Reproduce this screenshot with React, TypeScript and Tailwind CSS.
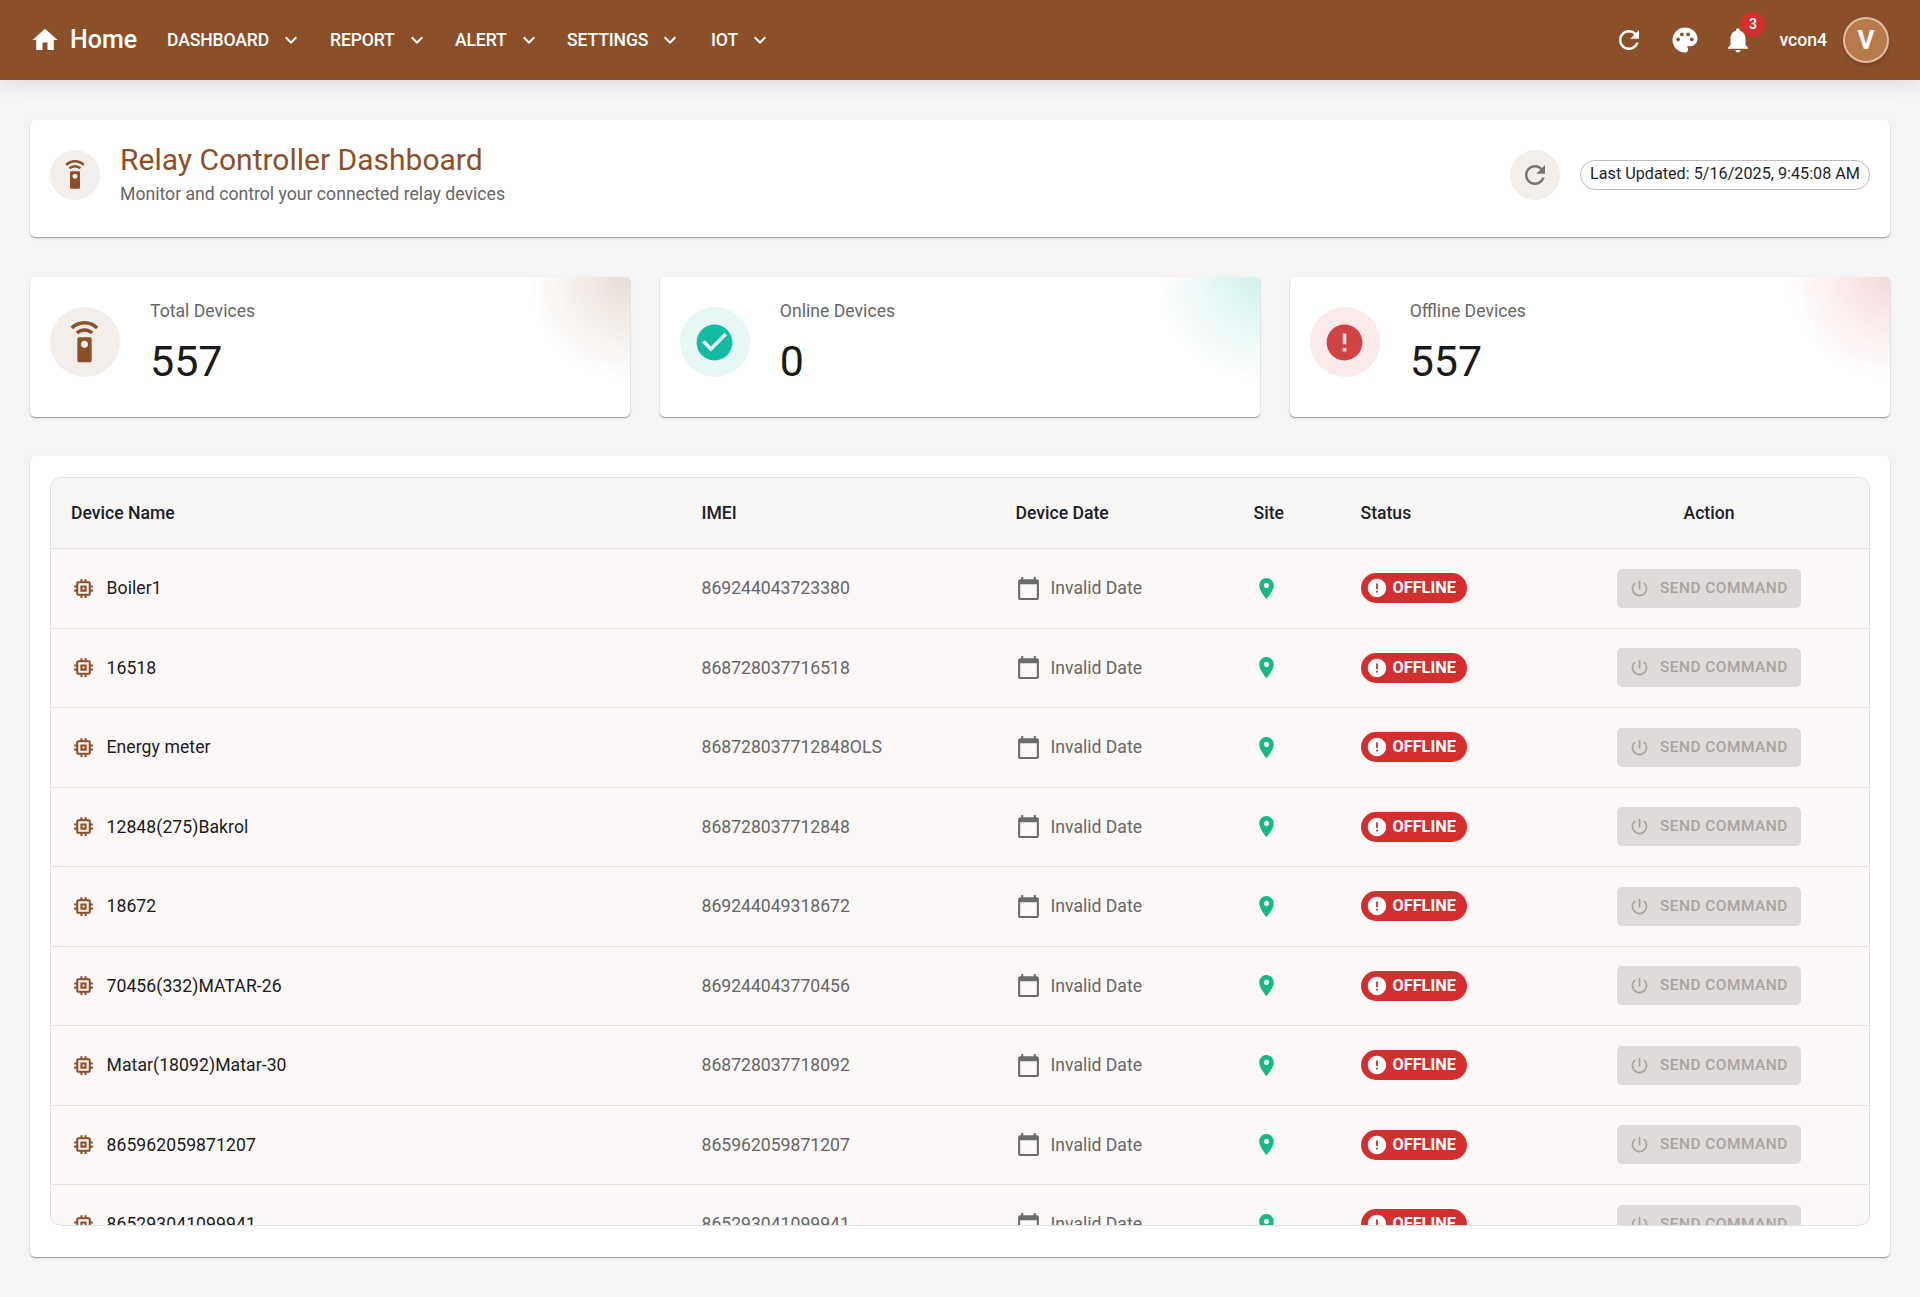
import React from "react";

const P = {
  home: "M10 20v-6h4v6h5v-8h3L12 3 2 12h3v8z",
  chevron: "M7.41 8.59 12 13.17l4.59-4.58L18 10l-6 6-6-6 1.41-1.41z",
  refresh: "M17.65 6.35C16.2 4.9 14.21 4 12 4c-4.42 0-7.99 3.58-7.99 8s3.57 8 7.99 8c3.73 0 6.84-2.55 7.73-6h-2.08c-.82 2.33-3.04 4-5.65 4-3.31 0-6-2.69-6-6s2.69-6 6-6c1.66 0 3.14.69 4.22 1.78L13 11h7V4l-2.35 2.35z",
  palette: "M12 2C6.49 2 2 6.49 2 12s4.49 10 10 10c1.38 0 2.5-1.12 2.5-2.5 0-.61-.23-1.2-.64-1.67-.08-.1-.13-.21-.13-.33 0-.28.22-.5.5-.5H16c3.31 0 6-2.69 6-6 0-4.96-4.49-9-10-9zm5.5 11c-.83 0-1.5-.67-1.5-1.5s.67-1.5 1.5-1.5 1.5.67 1.5 1.5-.67 1.5-1.5 1.5zm-3-4c-.83 0-1.5-.67-1.5-1.5S13.67 6 14.5 6s1.5.67 1.5 1.5S15.33 9 14.5 9zM5 11.5c0-.83.67-1.5 1.5-1.5s1.5.67 1.5 1.5S7.33 13 6.5 13 5 12.33 5 11.5zm6-4c0 .83-.67 1.5-1.5 1.5S8 8.33 8 7.5 8.67 6 9.5 6s1.5.67 1.5 1.5z",
  bell: "M12 22c1.1 0 2-.9 2-2h-4c0 1.1.89 2 2 2zm6-6v-5c0-3.07-1.64-5.64-4.5-6.32V4c0-.83-.67-1.5-1.5-1.5s-1.5.67-1.5 1.5v.68C7.63 5.36 6 7.92 6 11v5l-2 2v1h16v-1l-2-2z",
  remote: "M15 9H9c-.55 0-1 .45-1 1v12c0 .55.45 1 1 1h6c.55 0 1-.45 1-1V10c0-.55-.45-1-1-1zm-3 6c-1.1 0-2-.9-2-2s.9-2 2-2 2 .9 2 2-.9 2-2 2zM7.05 6.05l1.41 1.41C9.37 6.56 10.62 6 12 6s2.63.56 3.54 1.46l1.41-1.41C15.68 4.78 13.93 4 12 4s-3.68.78-4.95 2.05zM12 0C8.96 0 6.21 1.23 4.22 3.22l1.41 1.41C7.26 3.01 9.51 2 12 2s4.74 1.01 6.36 2.64l1.41-1.41C17.79 1.23 15.04 0 12 0z",
  check: "M12 2C6.48 2 2 6.48 2 12s4.48 10 10 10 10-4.48 10-10S17.52 2 12 2zm-2 15-5-5 1.41-1.41L10 14.17l7.59-7.59L19 8l-9 9z",
  error: "M12 2C6.48 2 2 6.48 2 12s4.48 10 10 10 10-4.48 10-10S17.52 2 12 2zm1 15h-2v-2h2v2zm0-4h-2V7h2v6z",
  memory: "M15 9H9v6h6V9zm-2 4h-2v-2h2v2zm8-2V9h-2V7c0-1.1-.9-2-2-2h-2V3h-2v2h-2V3H9v2H7c-1.1 0-2 .9-2 2v2H3v2h2v2H3v2h2v2c0 1.1.9 2 2 2h2v2h2v-2h2v2h2v-2h2c1.1 0 2-.9 2-2v-2h2v-2h-2v-2h2zm-4 6H7V7h10v10z",
  calendar: "M20 3h-1V1h-2v2H7V1H5v2H4c-1.1 0-2 .9-2 2v16c0 1.1.9 2 2 2h16c1.1 0 2-.9 2-2V5c0-1.1-.9-2-2-2zm0 18H4V8h16v13z",
  pin: "M12 2C8.13 2 5 5.13 5 9c0 5.25 7 13 7 13s7-7.75 7-13c0-3.87-3.13-7-7-7zm0 9.5c-1.38 0-2.5-1.12-2.5-2.5s1.12-2.5 2.5-2.5 2.5 1.12 2.5 2.5-1.12 2.5-2.5 2.5z",
  power: "M13 3h-2v10h2V3zm4.83 2.17l-1.42 1.42C17.99 7.86 19 9.81 19 12c0 3.87-3.13 7-7 7s-7-3.13-7-7c0-2.19 1.01-4.14 2.58-5.42L6.17 5.17C4.23 6.82 3 9.26 3 12c0 4.97 4.03 9 9 9s9-4.03 9-9c0-2.74-1.23-5.18-3.17-6.83z",
};

function Icon({ d, className }: { d: string; className: string }) {
  return (
    <svg viewBox="0 0 24 24" fill="currentColor" className={className} aria-hidden="true">
      <path d={d} />
    </svg>
  );
}

const nav: [string, string][] = [
  ["DASHBOARD", "w-[163px]"],
  ["REPORT", "w-[125px]"],
  ["ALERT", "w-[112px]"],
  ["SETTINGS", "w-[144px]"],
  ["IOT", "w-[75px]"],
];

const devices = [
  ["Boiler1", "869244043723380"],
  ["16518", "868728037716518"],
  ["Energy meter", "868728037712848OLS"],
  ["12848(275)Bakrol", "868728037712848"],
  ["18672", "869244049318672"],
  ["70456(332)MATAR-26", "869244043770456"],
  ["Matar(18092)Matar-30", "868728037718092"],
  ["865962059871207", "865962059871207"],
  ["865293041099941", "865293041099941"],
];

const cols = "grid grid-cols-[630.5px_314px_238px_107px_208.5px_320px]";
const cardShadow = "shadow-[0_1px_3px_rgba(0,0,0,0.1),0_1px_1px_rgba(0,0,0,0.32)]";

function Stat({
  label, value, wrap, icon, gradient, iconClass,
}: { label: string; value: string; wrap: string; icon: string; gradient: string; iconClass: string }) {
  return (
    <div className={`relative h-[140px] overflow-hidden rounded-[5px] bg-white flex items-start pl-5 ${cardShadow}`}>
      <div className={`absolute right-0 top-0 h-[120px] w-[120px] ${gradient}`} />
      <div className={`mt-[30px] flex h-[70px] w-[70px] items-center justify-center rounded-full ${wrap}`}>
        <Icon d={icon} className={iconClass} />
      </div>
      <div className="ml-[30px]">
        <div className="mt-[21px] text-[17.65px] leading-[26px] text-[#666666]">{label}</div>
        <div className="mt-[11px] text-[43px] leading-[52px] text-[#1a1a1a]">{value}</div>
      </div>
    </div>
  );
}

export default function App() {
  return (
    <div className="min-h-screen bg-[#f5f5f5] font-['Roboto',sans-serif]">
      <header className="relative z-10 flex h-20 items-center bg-[#8b5029] pl-[30px] pr-[31px] text-white shadow-[0_4px_20px_rgba(0,0,0,0.1)]">
        <Icon d={P.home} className="h-[30px] w-[30px]" />
        <span className="ml-[10px] w-[97px] text-[25px] font-medium">Home</span>
        <nav className="flex items-center">
          {nav.map(([t, w]) => (
            <div key={t} className={`flex items-center ${w}`}>
              <span className="text-[17.6px] font-medium tracking-[-0.15px]">{t}</span>
              <Icon d={P.chevron} className="ml-[10px] h-6 w-6 shrink-0" />
            </div>
          ))}
        </nav>
        <div className="ml-auto flex items-center">
          <Icon d={P.refresh} className="h-[30px] w-[30px]" />
          <Icon d={P.palette} className="ml-[26px] h-[30px] w-[30px]" />
          <div className="relative ml-[23px] h-[30px] w-[30px]">
            <Icon d={P.bell} className="h-[30px] w-[30px]" />
            <span className="absolute left-[17px] top-[-13px] flex h-[25px] w-[25px] items-center justify-center rounded-full bg-[#d32f2f] text-[14px] font-medium">3</span>
          </div>
          <span className="ml-[26px] text-[17.6px] font-medium">vcon4</span>
          <div className="ml-4 flex h-[46px] w-[46px] items-center justify-center rounded-full border-2 border-[#e0bda4] bg-[#b97a4b] text-[26px] font-bold shadow-[0_2px_4px_rgba(0,0,0,0.2)]">V</div>
        </div>
      </header>

      <main className="flex flex-col gap-10 px-[30px] pb-10 pt-10">
        <section className={`flex h-[117px] items-center rounded-[5px] bg-white px-5 pb-2 ${cardShadow}`}>
          <div className="flex h-[50px] w-[50px] items-center justify-center rounded-full bg-[#f3eeea]">
            <Icon d={P.remote} className="h-[30px] w-[30px] text-[#8b5029]" />
          </div>
          <div className="ml-5 mt-[-1px]">
            <h1 className="mt-[-1px] mb-px text-[30px] font-normal leading-[40px] text-[#8b5029]">Relay Controller Dashboard</h1>
            <p className="text-[17.65px] leading-[26px] text-[#666666]">Monitor and control your connected relay devices</p>
          </div>
          <div className="ml-auto flex h-[50px] w-[50px] items-center justify-center rounded-full bg-[#f3eeea]">
            <Icon d={P.refresh} className="h-[30px] w-[30px] text-[#757575]" />
          </div>
          <div className="ml-5 flex h-[30px] w-[290px] items-center justify-center rounded-full border border-[#bdbdbd] text-[16.2px] text-[#1f1f1f]">
            Last Updated: 5/16/2025, 9:45:08 AM
          </div>
        </section>

        <section className="mb-[-1px] grid grid-cols-3 gap-[29.5px]">
          <Stat label="Total Devices" value="557" wrap="bg-[#f3eeea]" icon={P.remote} iconClass="ml-[-1.5px] h-[43px] w-[43px] text-[#8b5029]" gradient="bg-[radial-gradient(circle_at_top_right,rgba(139,80,41,0.2),rgba(139,80,41,0)_60%)]" />
          <Stat label="Online Devices" value="0" wrap="bg-[#e6f7f5]" icon={P.check} iconClass="h-[43px] w-[43px] text-[#13bba4]" gradient="bg-[radial-gradient(circle_at_top_right,rgba(19,187,164,0.2),rgba(19,187,164,0)_60%)]" />
          <Stat label="Offline Devices" value="557" wrap="bg-[#faeaea]" icon={P.error} iconClass="h-[43px] w-[43px] text-[#d14343]" gradient="bg-[radial-gradient(circle_at_top_right,rgba(209,67,67,0.2),rgba(209,67,67,0)_60%)]" />
        </section>

        <section className={`h-[801px] rounded-[5px] bg-white px-5 pb-[31px] pt-[21px] ${cardShadow}`}>
          <div className="h-[749px] overflow-hidden rounded-[11px] border border-[#e0e0e0] bg-[#fcf8f7]">
            <div className={`${cols} h-[71px] items-center border-b border-[#e0e0e0] bg-[#f9f7f5] text-[17.6px] font-medium text-[#1a2027]`}>
              <div className="pl-5">Device Name</div>
              <div className="pl-5">IMEI</div>
              <div className="pl-5">Device Date</div>
              <div className="pl-5">Site</div>
              <div className="pl-5">Status</div>
              <div className="text-center">Action</div>
            </div>
            {devices.map(([name, imei]) => (
              <div key={imei + name} className={`${cols} h-[79.5px] items-center border-b border-[#e3e0de]`}>
                <div className="flex items-center pl-5 text-[17.6px] text-[#1a1a1a]">
                  <Icon d={P.memory} className="h-[25px] w-[25px] text-[#8b5029]" />
                  <span className="ml-[10.5px] font-[450] tracking-[0.07px]">{name}</span>
                </div>
                <div className="pl-5 text-[17.6px] text-[#666666]">{imei}</div>
                <div className="flex items-center pl-5 text-[17.6px] text-[#666666]">
                  <Icon d={P.calendar} className="h-[25px] w-[25px] text-[#6b6b6b]" />
                  <span className="ml-[10px]">Invalid Date</span>
                </div>
                <div className="pl-5">
                  <Icon d={P.pin} className="h-[25px] w-[25px] text-[#16b985]" />
                </div>
                <div className="pl-5">
                  <div className="flex h-[30px] w-[106px] items-center rounded-full bg-[#d32f2f] pl-[5px] text-[16.3px] font-bold text-white">
                    <Icon d={P.error} className="h-[22px] w-[22px]" />
                    <span className="ml-[5px]">OFFLINE</span>
                  </div>
                </div>
                <div className="flex justify-center">
                  <div className="flex h-[39px] w-[184px] items-center rounded-[5px] bg-[#dfdbda] pl-3 text-[15.4px] font-medium tracking-[0.5px] text-[#a8a4a2]">
                    <Icon d={P.power} className="h-[21px] w-[21px]" />
                    <span className="ml-[10px]">SEND COMMAND</span>
                  </div>
                </div>
              </div>
            ))}
          </div>
        </section>
      </main>
    </div>
  );
}
